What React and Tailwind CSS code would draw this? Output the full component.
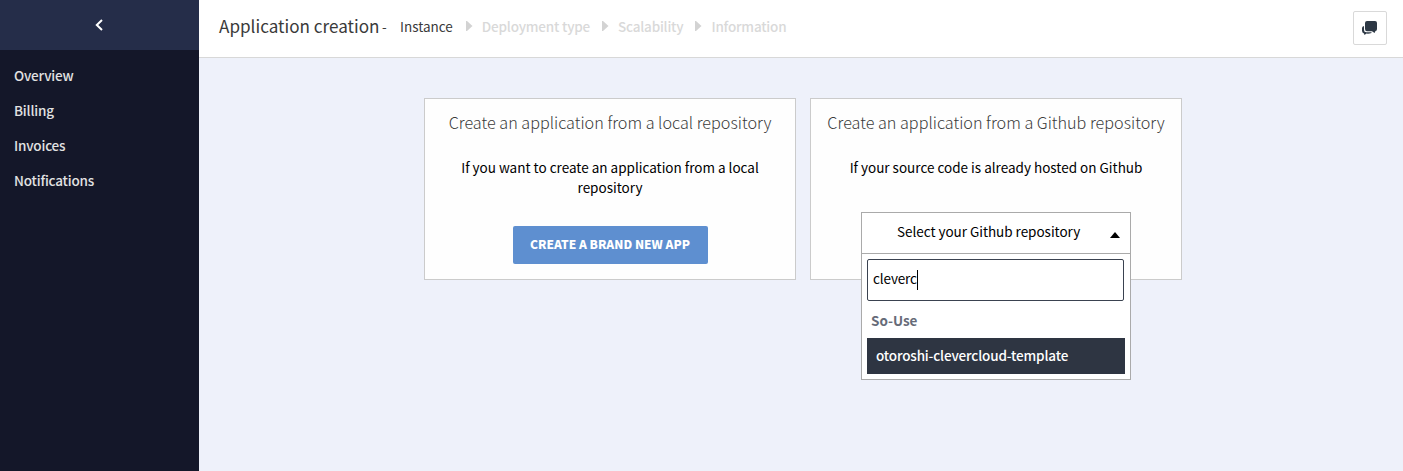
const nav = ["Overview", "Billing", "Invoices", "Notifications"];
const steps = ["Deployment type", "Scalability", "Information"];

function Arrow() {
  return (
    <svg className="mb-px h-[10px] w-[7px] shrink-0" viewBox="0 0 7 10" fill="#d3d3d3">
      <path d="M0 0H1L6.500 5L1 10H0Z" />
    </svg>
  );
}

function Card({ title, children }) {
  return (
    <section className="relative flex h-[182px] w-[372px] flex-col items-center border border-[#cbcbcb] bg-[#fefefe]">
      <h2 className="mt-[13px] h-5 whitespace-nowrap text-[16.2px] font-light leading-5 text-[#3a3a3a]">{title}</h2>
      {children}
    </section>
  );
}

export default function App() {
  return (
    <div className="flex h-[471px] w-[1403px] overflow-hidden bg-[#eef1fa] font-['Noto_Sans_CJK_SC',sans-serif] text-[13.5px] leading-5 text-black">
      <aside className="flex w-[199px] shrink-0 flex-col bg-[#141729]">
        <div className="flex h-[50px] items-center justify-center bg-[#252d49] pr-[2px]">
          <svg className="h-3 w-2" viewBox="0 0 8 12" fill="none" stroke="#fff" strokeWidth="2">
            <path d="M7 1L1.8 6L7 11" />
          </svg>
        </div>
        <nav className="flex flex-col gap-[15px] pl-[14px] pt-[15px] font-medium tracking-[-0.18px] text-[#e2e2e2]">
          {nav.map((n) => (
            <a key={n}>{n}</a>
          ))}
        </nav>
      </aside>
      <div className="flex grow flex-col">
        <header className="flex h-[58px] items-center justify-between border-b border-[#d8d8d8] bg-white pl-5 pr-4">
          <div className="flex items-center pb-[5px]">
            <h1 className="w-[161px] whitespace-nowrap text-[17.1px] text-[#3a3a3a]">Application creation</h1>
            <span className="ml-[2px] w-[5px] text-[#3a3a3a]">-</span>
            <span className="ml-[13px] mr-[13px] text-[#3a3a3a]">Instance</span>
            {steps.map((s) => (
              <span key={s} className="mr-3 flex items-center gap-[9px] whitespace-nowrap font-medium tracking-[-0.2px] text-[#d9d9d9]">
                <Arrow />
                {s}
              </span>
            ))}
          </div>
          <button className="mb-[2px] flex h-[34px] w-[34px] items-center justify-center rounded-[2px] border border-[#d9d9d9] bg-white">
            <svg className="mr-px h-[14px] w-[15px]" viewBox="0 0 15 14" fill="#2d3845">
              <path d="M5 0H13Q15 0 15 2V8Q15 9.800 13.500 10L12.500 12L10 10.200H5Q3 10.200 3 8V2Q3 0 5 0Z" />
              <path d="M2 5V9Q2 11.200 4.200 11.200H9.500V12Q7 13 4.500 12.600L2.500 14L2 12.400Q0 12 0 9.800V7Q0 5.500 2 5Z" />
            </svg>
          </button>
        </header>
        <main className="flex gap-[14px] pl-[225px] pt-10">
          <Card title="Create an application from a local repository">
            <p className="mt-[25px] w-[310px] text-center">If you want to create an application from a local repository</p>
            <button className="mt-[29px] h-[38px] w-[195px] rounded-[2px] bg-[#5e8fd0] pb-[2px] text-[12px] font-black text-white">
              CREATE A BRAND NEW APP
            </button>
          </Card>
          <Card title="Create an application from a Github repository">
            <p className="mt-[25px] whitespace-nowrap text-center">If your source code is already hosted on Github</p>
            <div className="absolute left-[50px] top-[113px] h-[168px] w-[270px] border border-[#aaa] bg-white">
              <div className="flex h-[41px] items-center border-b border-[#aaa] pl-[35px] pr-[10px]">
                <span className="grow pb-1 tracking-[-0.03px]">Select your Github repository</span>
                <svg className="mt-[3px] h-[6px] w-[10px]" viewBox="0 0 10 6">
                  <path d="M5 0L10 6H0Z" />
                </svg>
              </div>
              <div className="ml-[5px] mt-[5px] flex h-[42px] w-[257px] items-center rounded-[2px] border border-[#3a4250] pl-[5px]">
                <span className="pb-1 tracking-[-0.12px]">cleverc</span>
                <i className="h-5 w-px bg-black" />
              </div>
              <div className="ml-[9px] mt-[9px] font-bold text-[#666b78]">So-Use</div>
              <div className="ml-[5px] mt-[8px] flex h-9 w-[258px] items-center bg-[#2e3542] pb-[3px] pl-[9px] font-medium tracking-[-0.15px] text-white">
                otoroshi-clevercloud-template
              </div>
            </div>
          </Card>
        </main>
      </div>
    </div>
  );
}
